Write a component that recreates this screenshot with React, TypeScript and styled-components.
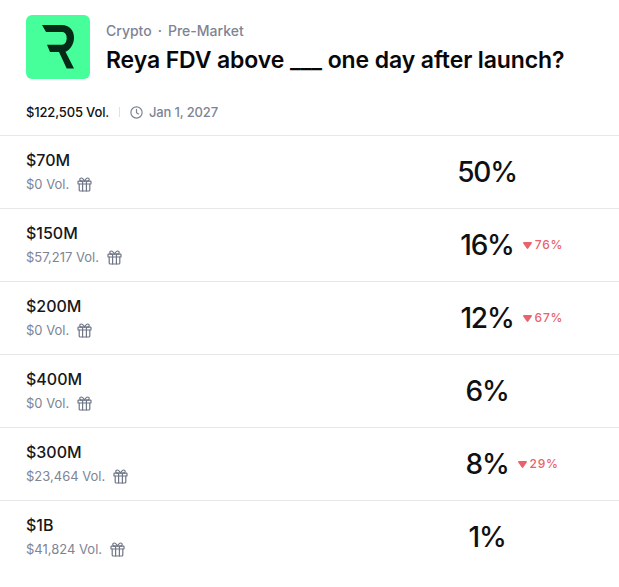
import React from "react";
import styled, { createGlobalStyle } from "styled-components";

const Global = createGlobalStyle`
  html, body { margin: 0; padding: 0; background: #fff; }
  body { font-family: Inter, "Liberation Sans", sans-serif; color: #0d0d0f; }
`;

const Page = styled.div`
  width: 619px;
  height: 587px;
  overflow: hidden;
  padding-top: 15px;
  box-sizing: border-box;
`;

const Header = styled.header`
  display: flex;
  align-items: flex-start;
  gap: 16px;
  padding-left: 26px;
`;

const Logo = styled.div`
  width: 64px;
  height: 64px;
  border-radius: 6px;
  background: #47ff9a;
  display: flex;
  align-items: center;
  justify-content: center;
`;

const HeadText = styled.div`
  display: flex;
  flex-direction: column;
  gap: 6px;
  padding-top: 7px;
`;

const Crumbs = styled.div`
  display: flex;
  gap: 6px;
  font-size: 14px;
  line-height: 17px;
  font-weight: 500;
  color: #7e8494;
`;

const Title = styled.h1`
  margin: 0;
  font-size: 23px;
  line-height: 30px;
  font-weight: 600;
  letter-spacing: -0.11px;
  color: #08080a;
`;

const Stats = styled.div`
  display: flex;
  align-items: center;
  height: 20px;
  margin-top: 23px;
  padding-left: 26px;
  font-size: 13px;
  letter-spacing: -0.16px;
`;

const Volume = styled.span`
  font-weight: 500;
  color: #111;
`;

const Divider = styled.span`
  width: 1px;
  height: 10px;
  background: #dfe1e5;
  margin: 0 10px;
`;

const DateText = styled.span`
  display: flex;
  align-items: center;
  gap: 6px;
  color: #7e8494;
  font-weight: 500;
`;

const List = styled.div`
  margin-top: 13px;
`;

const Row = styled.div`
  height: 73px;
  box-sizing: border-box;
  border-top: 1px solid #e6e7e9;
  padding-left: 26px;
  display: grid;
  grid-template-columns: 1fr 132px;
  align-items: center;
`;

const Outcome = styled.div`
  display: flex;
  flex-direction: column;
  gap: 5px;
  padding-bottom: 1px;
`;

const Name = styled.div`
  font-size: 16px;
  line-height: 20px;
  font-weight: 500;
  color: #17171a;
`;

const Meta = styled.div`
  display: flex;
  align-items: center;
  gap: 8px;
  font-size: 13px;
  line-height: 18px;
  font-weight: 400;
  color: #7e8494;
`;

const PercentCell = styled.div`
  justify-self: start;
  width: 0;
  display: flex;
  justify-content: center;
`;

const Percent = styled.div`
  position: relative;
  font-size: 28px;
  line-height: 36px;
  font-weight: 500;
  letter-spacing: -1.2px;
  color: #101012;
  white-space: nowrap;
`;

const Delta = styled.span`
  position: absolute;
  left: calc(100% + 9px);
  top: 11px;
  display: flex;
  align-items: center;
  gap: 3px;
  font-size: 12px;
  line-height: 14px;
  font-weight: 500;
  letter-spacing: 0.8px;
  color: #e8636b;
`;

const GiftIcon = () => (
  <svg width="15" height="15" viewBox="0 0 15 15" fill="none" stroke="#6f7585" strokeWidth="1.2" strokeLinejoin="round" strokeLinecap="round">
    <rect x="1" y="4.2" width="13" height="2.8" rx="0.6" />
    <path d="M2.2 7v6a1 1 0 0 0 1 1h8.6a1 1 0 0 0 1-1V7" />
    <path d="M5.6 4.2V14M9.4 4.2V14" />
    <path d="M7.5 4.2C6.6 2.2 5.4 1 4.3 1 3.3 1 2.8 1.7 2.8 2.5c0 1 .8 1.7 2 1.7M7.5 4.2C8.4 2.2 9.6 1 10.7 1c1 0 1.5.7 1.5 1.5 0 1-.8 1.7-2 1.7" />
  </svg>
);

const ClockIcon = () => (
  <svg width="13" height="13" viewBox="0 0 13 13" fill="none" stroke="#7e8494" strokeWidth="1.2" strokeLinecap="round" strokeLinejoin="round">
    <circle cx="6.5" cy="6.5" r="5.6" />
    <path d="M6.5 3.3v3.4l2 1.2" />
  </svg>
);

const DownIcon = () => (
  <svg width="9" height="7" viewBox="0 0 9 7">
    <path d="M1 0h7a.9.9 0 0 1 .7 1.5L5.2 6.5a.9.9 0 0 1-1.4 0L.3 1.5A.9.9 0 0 1 1 0z" fill="#e8636b" />
  </svg>
);

const rows = [
  { name: "$70M", vol: "$0 Vol.", pct: "50%" },
  { name: "$150M", vol: "$57,217 Vol.", pct: "16%", delta: "76%" },
  { name: "$200M", vol: "$0 Vol.", pct: "12%", delta: "67%" },
  { name: "$400M", vol: "$0 Vol.", pct: "6%" },
  { name: "$300M", vol: "$23,464 Vol.", pct: "8%", delta: "29%" },
  { name: "$1B", vol: "$41,824 Vol.", pct: "1%" },
];

export default function App() {
  return (
    <Page>
      <Global />
      <Header>
        <Logo>
          <svg width="32" height="44" viewBox="0 0 32 44">
            <path
              fill="#062a18"
              d="M0 0H20C27 0 32 5 32 12.5C32 19.5 28 25 23.5 26.7L32 43.5H24.7L17 27H8L5 19.7H20C23 19.7 24.7 16.5 24.7 13C24.7 9.5 23 7 20 7H4Z"
            />
          </svg>
        </Logo>
        <HeadText>
          <Crumbs>
            <span>Crypto</span>
            <span>·</span>
            <span>Pre-Market</span>
          </Crumbs>
          <Title>Reya FDV above ___ one day after launch?</Title>
        </HeadText>
      </Header>
      <Stats>
        <Volume>$122,505 Vol.</Volume>
        <Divider />
        <DateText>
          <ClockIcon />
          Jan 1, 2027
        </DateText>
      </Stats>
      <List>
        {rows.map((r) => (
          <Row key={r.name}>
            <Outcome>
              <Name>{r.name}</Name>
              <Meta>
                {r.vol}
                <GiftIcon />
              </Meta>
            </Outcome>
            <PercentCell>
              <Percent>
                {r.pct}
                {r.delta && (
                  <Delta>
                    <DownIcon />
                    {r.delta}
                  </Delta>
                )}
              </Percent>
            </PercentCell>
          </Row>
        ))}
      </List>
    </Page>
  );
}
